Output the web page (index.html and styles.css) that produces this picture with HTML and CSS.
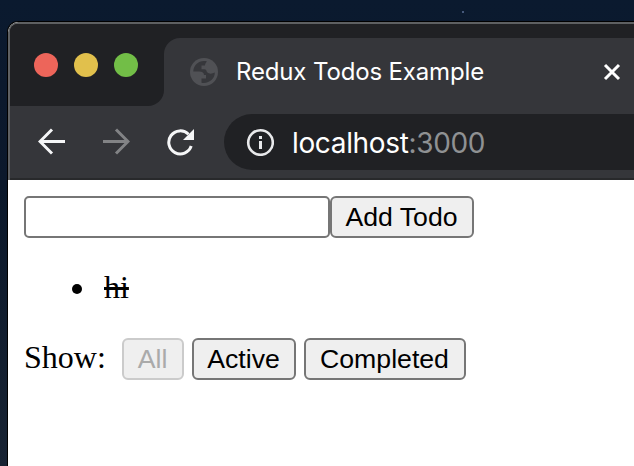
FILE: index.html
```
<!DOCTYPE html>
<html lang="en">
<head>
<meta charset="utf-8">
<title>Redux Todos Example</title>
<link rel="stylesheet" href="styles.css">
</head>
<body>
<i class="star"></i>
<div class="window">
  <header class="chrome">
    <div class="tabstrip">
      <div class="lights"><i class="red"></i><i class="yellow"></i><i class="green"></i></div>
      <div class="tab">
        <svg class="globe" width="28" height="28" viewBox="0 0 28 28"><circle cx="14" cy="14" r="14" fill="#505155"/><path d="M17 3.500C10 1.500 3.500 6.500 3.300 13.500H9C12.500 13.500 14 15 14 17H16V20.500H11.500V24.700C19 26 25 20.500 24.800 14.500C22 16 19 16 17.500 14.500C16 13 17 11.500 14.500 11.200H11.500V7.500H15C15 5.500 16 4.500 17 3.500Z" fill="#36373b"/></svg>
        <span class="title">Redux Todos Example</span>
        <svg class="close" width="18" height="18" viewBox="0 0 18 18"><path d="M2 2 16 16M16 2 2 16" stroke="#fff" stroke-width="3"/></svg>
      </div>
    </div>
    <div class="toolbar">
      <svg width="28" height="28" viewBox="0 0 28 28"><path d="M27 13.500H3M14 1.500 2 13.500 14 25.500" fill="none" stroke="#f5f6f7" stroke-width="3"/></svg>
      <svg width="28" height="28" viewBox="0 0 28 28"><path d="M1 13.500H25M14 1.500 26 13.500 14 25.500" fill="none" stroke="#828385" stroke-width="3"/></svg>
      <svg width="28" height="28" viewBox="0 0 28 28"><path d="M22.500 6.300A11.500 11.500 0 1 0 25.200 18" fill="none" stroke="#f5f6f7" stroke-width="3"/><path d="M28 1V12H17Z" fill="#f5f6f7"/></svg>
      <div class="address">
        <svg width="28" height="28" viewBox="0 0 28 28"><circle cx="14.500" cy="14.500" r="12.300" fill="none" stroke="#e8e9eb" stroke-width="2.600"/><path d="M13 8h3v3h-3zM13 13h3v8h-3z" fill="#e8e9eb"/></svg>
        <span class="url">localhost<span class="port">:3000</span></span>
      </div>
    </div>
  </header>
  <main class="page">
    <form class="add"><input type="text" aria-label="Todo"><button type="button">Add Todo</button></form>
    <ul><li><span>hi</span></li></ul>
    <div class="filters"><span class="show">Show:</span><button class="all" disabled>All</button><button class="active">Active</button><button class="completed">Completed</button></div>
  </main>
</div>
</body>
</html>
```
FILE: styles.css
```
* { box-sizing: border-box; }
body {
  margin: 0;
  height: 466px;
  padding: 21px 0 0 7px;
  overflow: hidden;
  background: linear-gradient(#0b1a2f, #0b182b 40%, #182333);
}
svg { display: block; flex: none; }
.star { position: absolute; left: 462px; top: 11px; width: 2px; height: 2px; background: #46597c; }
.window {
  height: 445px;
  border: solid #000;
  border-width: 1px 0 0 1px;
  border-top-left-radius: 11px;
  overflow: hidden;
  background: #fff;
}
.chrome {
  height: 158px;
  border: solid #5e6062;
  border-width: 2px 0 0 2px;
  border-top-left-radius: 10px;
  background: #35363a;
  overflow: hidden;
}
.tabstrip { display: flex; height: 82px; background: linear-gradient(#202124 50px, #35363a 50px); }
.lights {
  display: flex;
  gap: 16px;
  width: 154px;
  padding: 29px 0 0 24px;
  background: #202124;
  border-bottom-right-radius: 16px;
}
.lights i { width: 24px; height: 24px; border-radius: 50%; }
.red { background: #ed655a; }
.yellow { background: #e1c04c; }
.green { background: #72be47; }
.tab {
  display: flex;
  align-items: center;
  flex: 1;
  height: 68px;
  margin-top: 14px;
  padding: 0 13px 0 26px;
  background: #35363a;
  border-top-left-radius: 16px;
}
.title {
  flex: 1;
  margin-left: 18px;
  font: 24px/28px Inter, sans-serif;
  letter-spacing: -0.15px;
  color: #fff;
  white-space: nowrap;
}
.toolbar {
  display: flex;
  align-items: center;
  height: 74px;
  padding-left: 28px;
  gap: 36px;
  border-bottom: 2px solid #28292b;
}
.address {
  display: flex;
  align-items: center;
  flex: 1;
  height: 56px;
  margin-left: -6px;
  padding-left: 22px;
  border-radius: 28px 0 0 28px;
  background: #202124;
}
.url {
  margin-left: 18px;
  padding-top: 1px;
  font: 28px/32px Inter, sans-serif;
  letter-spacing: -0.35px;
  color: #fff;
}
.port { color: #8f9193; }
.page { padding: 16px; font: 32px/36px "Liberation Serif", serif; color: #000; }
.add { display: flex; }
input { width: 306px; height: 42px; margin: 0; border: 2px solid #767676; border-radius: 5px; background: #fff; }
button {
  height: 42px;
  margin: 0;
  padding: 0 1px 1px 0;
  border: 2px solid #767676;
  border-radius: 6px;
  background: #efefef;
  color: #000;
  font: 26.67px/36px "Liberation Sans", sans-serif;
}
.add button { width: 144px; }
ul { margin: 31px 0 33px; padding-left: 48px; list-style: none; }
li { display: flex; align-items: center; gap: 22px; }
li::before { content: ""; width: 10px; height: 10px; margin-top: 4px; border-radius: 50%; background: #000; }
li span { text-decoration: line-through; }
.filters { display: flex; }
.show { width: 98px; padding-top: 1px; }
.all { width: 62px; margin-right: 8px; border-color: #cbcbcb; color: #aaa; }
.active { width: 104px; margin-right: 8px; }
.completed { width: 162px; }
```
